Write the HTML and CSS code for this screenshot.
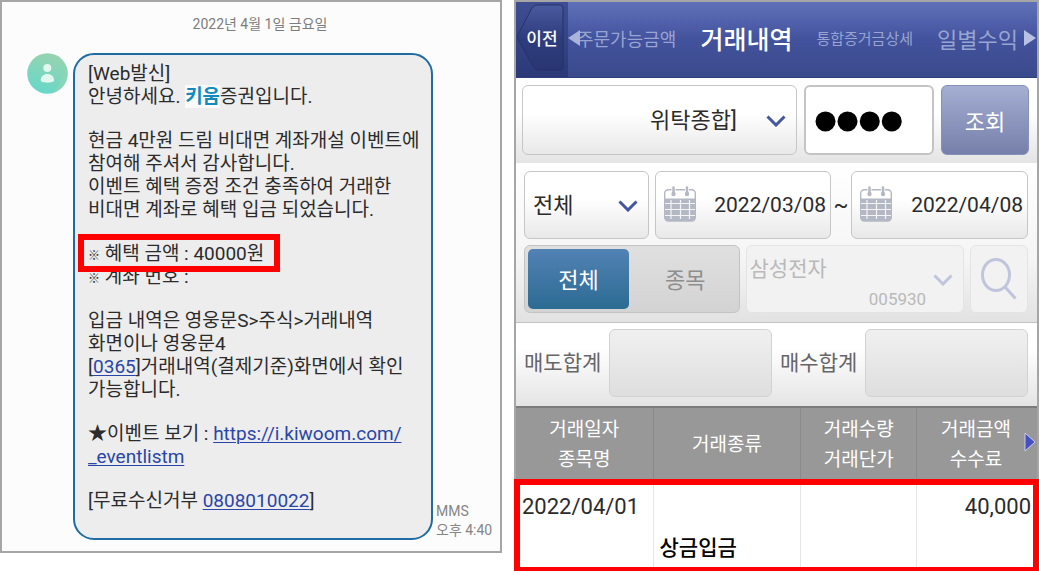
FILE: index.html
```html
<!DOCTYPE html>
<html lang="ko">
<head>
    <meta charset="UTF-8">
    <meta name="viewport" content="width=device-width, initial-scale=1.0">
    <title>거래내역</title>
    <link rel="stylesheet" href="styles.css">
</head>
<body>

    <div class="container">
        <section class="message-panel">
            <p class="date">2022년 4월 1일 금요일</p>

            <div class="message">
                <svg class="avatar" viewBox="0 0 41 41">
                    <defs>
                        <linearGradient id="avatarFill" x1="0.6" y1="0" x2="0.3" y2="1">
                            <stop offset="0" stop-color="#98d3b0"/>
                            <stop offset="1" stop-color="#66d8ca"/>
                        </linearGradient>
                    </defs>
                    <circle cx="20.5" cy="20.5" r="20.3" fill="url(#avatarFill)"/>
                    <path d="M39 13 A20.3 20.3 0 0 1 25 40 Q36 29 39 13Z" fill="#8fd5b4" opacity="0.6"/>
                    <circle cx="20.3" cy="15" r="4" fill="#e2f7ef"/>
                    <path d="M13.7 27.3c0-4 3-6.3 6.7-6.3s6.7 2.3 6.7 6.3c0 1.700-3 2.400-6.700 2.400s-6.700-.7-6.700-2.400z" fill="#e2f7ef"/>
                </svg>

                <div class="bubble">
                    <p>[Web발신]<br>안녕하세요. <b class="brand">키움</b>증권입니다.</p>
                    <p>현금 4만원 드림 비대면 계좌개설 이벤트에<br>참여해 주셔서 감사합니다.<br>이벤트 혜택 증정 조건 충족하여 거래한<br>비대면 계좌로 혜택 입금 되었습니다.</p>
                    <p><span class="amount"><span class="mark">※</span> 혜택 금액 : 40000원</span><br><span class="mark">※</span> 계좌 번호 :</p>
                    <p>입금 내역은 영웅문S&gt;주식&gt;거래내역<br>화면이나 영웅문4<br>[<a href="#">0365</a>]거래내역(결제기준)화면에서 확인<br>가능합니다.</p>
                    <p>★이벤트 보기 : <a href="#">https://i.kiwoom.com/<br>_eventlistm</a></p>
                    <p>[무료수신거부 <a href="#">0808010022</a>]</p>
                </div>

                <div class="meta">MMS<br>오후 4:40</div>
            </div>
        </section>

        <section class="app-panel">
            <header class="top-bar">
                <button type="button" class="back">
                    <svg viewBox="0 0 52 76" preserveAspectRatio="none">
                        <defs>
                            <linearGradient id="backFill" x1="0" y1="0" x2="0" y2="1">
                                <stop offset="0" stop-color="#4a5a9e"/>
                                <stop offset="0.5" stop-color="#2e3d7e"/>
                                <stop offset="1" stop-color="#2a3673"/>
                            </linearGradient>
                        </defs>
                        <path d="M21 3H44Q47 3 47 6V66Q47 69 44 69H23Q19 69 17 65L2 38Q1 36 2 33L16 6Q18 3 21 3Z" fill="url(#backFill)" stroke="#25316b"/>
                    </svg>
                    <span>이전</span>
                </button>
                <nav class="tabs">
                    <svg class="arrow arrow-left" viewBox="0 0 12 16"><path d="M12 0V16L0 8Z" fill="#a9b3dc"/></svg>
                    <a href="#">주문가능금액</a>
                    <a href="#" class="active">거래내역</a>
                    <a href="#" class="small">통합증거금상세</a>
                    <a href="#" class="large">일별수익</a>
                    <svg class="arrow arrow-right" viewBox="0 0 12 16"><path d="M0 0V16L12 8Z" fill="#b9c1e2"/></svg>
                </nav>
            </header>

            <form>
                <div class="account-row">
                    <div class="select-box account">
                        <select aria-label="계좌"><option>위탁종합]</option></select>
                        <svg class="chevron" viewBox="0 0 20 12"><path d="M1.500 1.500L10 10L18.500 1.500"/></svg>
                    </div>
                    <input type="password" class="password" aria-label="비밀번호" value="1234">
                    <button type="button" class="search-button">조회</button>
                </div>

                <div class="filters">
                    <div class="filter-row dates">
                        <div class="select-box">
                            <select aria-label="구분"><option>전체</option></select>
                            <svg class="chevron" viewBox="0 0 20 12"><path d="M1.500 1.500L10 10L18.500 1.500"/></svg>
                        </div>
                        <div class="date-box">
                            <svg class="calendar" viewBox="0 0 32 36">
                                <rect x="0.700" y="3.700" width="30.600" height="31" rx="3.500" fill="#fff" stroke="#b4b8c4" stroke-width="1.400"/>
                                <path d="M0.500 12.500H31.500V31.500Q31.500 35.500 28 35.500H4Q0.500 35.500 0.500 31.500Z" fill="#b4b8c4"/>
                                <path d="M1 17.500H31M1 23.500H31M1 29.500H31M7 14V33M16.500 14V33M25.500 14V33" stroke="#f4f4f6" stroke-width="1.200"/>
                                <path d="M9.500 1.500V8M23 1.500V8" stroke="#fff" stroke-width="4"/>
                                <path d="M9.500 1.500V8M23 1.500V8" stroke="#b4b8c4" stroke-width="2.500" stroke-linecap="round"/>
                                <circle cx="9.500" cy="8" r="2.200" fill="#b4b8c4"/><circle cx="23" cy="8" r="2.200" fill="#b4b8c4"/>
                            </svg>
                            <input type="text" aria-label="시작일" value="2022/03/08">
                        </div>
                        <span class="tilde">~</span>
                        <div class="date-box">
                            <svg class="calendar" viewBox="0 0 32 36">
                                <rect x="0.700" y="3.700" width="30.600" height="31" rx="3.500" fill="#fff" stroke="#b4b8c4" stroke-width="1.400"/>
                                <path d="M0.500 12.500H31.500V31.500Q31.500 35.500 28 35.500H4Q0.500 35.500 0.500 31.500Z" fill="#b4b8c4"/>
                                <path d="M1 17.500H31M1 23.500H31M1 29.500H31M7 14V33M16.500 14V33M25.500 14V33" stroke="#f4f4f6" stroke-width="1.200"/>
                                <path d="M9.500 1.500V8M23 1.500V8" stroke="#fff" stroke-width="4"/>
                                <path d="M9.500 1.500V8M23 1.500V8" stroke="#b4b8c4" stroke-width="2.500" stroke-linecap="round"/>
                                <circle cx="9.500" cy="8" r="2.200" fill="#b4b8c4"/><circle cx="23" cy="8" r="2.200" fill="#b4b8c4"/>
                            </svg>
                            <input type="text" aria-label="종료일" value="2022/04/08">
                        </div>
                    </div>

                    <div class="filter-row stocks">
                        <div class="segment">
                            <button type="button" class="on">전체</button>
                            <button type="button">종목</button>
                        </div>
                        <div class="select-box stock">
                            <select aria-label="종목" disabled><option>삼성전자</option></select>
                            <span class="code">005930</span>
                            <svg class="chevron" viewBox="0 0 20 12"><path d="M1.500 1.500L10 10L18.500 1.500"/></svg>
                        </div>
                        <button type="button" class="find" aria-label="종목 검색" disabled>
                            <svg viewBox="0 0 36 42"><ellipse cx="15" cy="17" rx="13.500" ry="15.500"/><path d="M24 29L34.500 40.500"/></svg>
                        </button>
                    </div>
                </div>

                <div class="totals">
                    <label for="sell">매도합계</label>
                    <input type="text" id="sell" readonly>
                    <label for="buy">매수합계</label>
                    <input type="text" id="buy" readonly>
                </div>
            </form>

            <div class="history">
                <table>
                    <colgroup>
                        <col class="col-date"><col class="col-type"><col class="col-count"><col class="col-price">
                    </colgroup>
                    <thead>
                        <tr>
                            <th>거래일자<br>종목명</th>
                            <th>거래종류</th>
                            <th>거래수량<br>거래단가</th>
                            <th>거래금액<br>수수료</th>
                        </tr>
                    </thead>
                    <tbody>
                        <tr>
                            <td>2022/04/01</td>
                            <td class="type">상금입금</td>
                            <td></td>
                            <td class="price">40,000</td>
                        </tr>
                    </tbody>
                </table>
                <svg class="next" viewBox="0 0 12 20"><path d="M1 1V19L11 10Z" fill="#4450c0" stroke="#c8ccec"/></svg>
            </div>
        </section>
    </div>

</body>
</html>
```

FILE: styles.css
```css
* {
    box-sizing: border-box;
}

body {
    font-family: Roboto, "Noto Sans CJK KR", sans-serif;
    background-color: #fff;
    color: #2b2b2b;
    margin: 0;
}

p {
    margin: 0;
}

button, input, select {
    font-family: inherit;
    font-size: 22px;
    color: inherit;
    margin: 0;
    padding: 0;
    min-width: 0;
}

svg {
    display: block;
}

/* Contenedor principal */
.container {
    display: grid;
    grid-template-columns: 502fr 525fr;
    gap: 12px;
    align-items: start;
}

/* Mensaje */
.message-panel {
    border: 2px solid #a6a6a6;
    background-color: #fcfcfc;
    padding-bottom: 11px;
}

.date {
    padding: 10px 0 17px 18px;
    font-size: 14px;
    line-height: 24px;
    text-align: center;
    color: #7d7d7d;
}

.message {
    display: flex;
    padding-left: 25px;
}

.avatar {
    width: 41px;
    height: 41px;
    margin-right: 5px;
    flex: none;
}

.bubble {
    flex: 1;
    display: flex;
    flex-direction: column;
    gap: 21px;
    padding: 7px 0 26px 13px;
    border: 2px solid #1f6ba3;
    border-radius: 21px;
    background-color: #ededed;
    font-size: 19px;
    line-height: 23px;
    white-space: nowrap;
}

.bubble a {
    color: #2a45a8;
    text-underline-offset: 2px;
    text-decoration-thickness: 1px;
}

.brand {
    color: #128abb;
    background-color: #fafafa;
}

.mark {
    font-size: 12px;
    line-height: 1;
}

.amount {
    position: relative;
}

.amount::after {
    content: "";
    position: absolute;
    inset: -8px -16px -7px -10px;
    border: 6px solid #f00;
}

.meta {
    width: 67px;
    align-self: flex-end;
    padding-left: 3px;
    font-size: 14px;
    line-height: 19px;
    color: #858585;
    white-space: nowrap;
}

/* Barra superior */
.app-panel {
    border: 2px solid #a6a6a6;
    border-bottom: none;
}

.top-bar {
    display: flex;
    height: 76px;
    background: linear-gradient(#6070b8, #42529d 50%, #3b4a8b);
    border-bottom: 1px solid #303f7c;
}

.back {
    position: relative;
    width: 52px;
    padding-bottom: 4px;
    border: none;
    background: linear-gradient(#3f4e92, #2b3977);
    color: #fff;
    font-size: 17px;
    font-weight: 500;
}

.back svg {
    position: absolute;
    inset: 0;
    width: 100%;
    height: 100%;
}

.back span {
    position: relative;
}

.tabs {
    position: relative;
    flex: 1;
    display: flex;
    align-items: center;
    justify-content: space-between;
    padding: 0 19px 4px 9px;
}

.tabs a {
    color: #98a4d2;
    font-size: 18px;
    text-decoration: none;
    white-space: nowrap;
}

.tabs .active {
    color: #fff;
    font-size: 25px;
    font-weight: 500;
}

.tabs .small {
    font-size: 15px;
}

.tabs .large {
    font-size: 22px;
}

.arrow {
    position: absolute;
    top: 28px;
    width: 12px;
    height: 16px;
}

.arrow-left {
    left: 0;
}

.arrow-right {
    right: 1px;
}

/* Campos de consulta */
.account-row {
    display: grid;
    grid-template-columns: 274fr 130fr 88fr;
    gap: 7px;
    padding: 7px 8px 8px 6px;
    background: linear-gradient(#fff 40%, #e4e4e4);
}

.account-row > * {
    height: 70px;
}

.select-box {
    position: relative;
}

.select-box select {
    appearance: none;
    width: 100%;
    height: 100%;
    padding-left: 8px;
    border: 1px solid #c6c6c6;
    border-radius: 6px;
    background: linear-gradient(#fff 40%, #e8e8e8);
}

.account select {
    padding-left: 127px;
}

.chevron {
    position: absolute;
    top: 50%;
    right: 11px;
    width: 20px;
    height: 12px;
    margin-top: -5px;
    fill: none;
    stroke: #4355a3;
    stroke-width: 3;
}

.password {
    padding-left: 9px;
    border: 2px solid #c4c4c4;
    border-radius: 6px;
    background-color: #fff;
    color: #000;
    font-family: "Liberation Sans", sans-serif;
    font-size: 63px;
    -webkit-text-stroke: 3px #000;
}

.search-button {
    border: 1px solid #8590bb;
    border-radius: 6px;
    background: linear-gradient(#a5afd3, #757fa9);
    color: #fff;
}

.filters {
    display: grid;
    gap: 6px;
    padding: 8px 9px 9px 8px;
    background: linear-gradient(#fff, #f5f5f5 60%, #e2e2e2);
    border-bottom: 1px solid #c2c2c2;
}

.filter-row {
    display: grid;
}

.filter-row > * {
    height: 68px;
}

.dates {
    grid-template-columns: 125fr 6px 176fr 20px 177fr;
}

.dates > :first-child {
    grid-column: 1;
}

.dates > :nth-child(2) {
    grid-column: 3;
}

.date-box {
    display: flex;
    align-items: center;
    padding: 0 4px 0 8px;
    border: 1px solid #c6c6c6;
    border-radius: 6px;
    background: linear-gradient(#fff 40%, #e8e8e8);
}

.calendar {
    width: 32px;
    height: 36px;
    margin-bottom: 2px;
    flex: none;
}

.date-box input {
    flex: 1;
    width: 0;
    border: none;
    background: none;
    font-size: 21px;
    text-align: right;
}

.tilde {
    font-size: 22px;
    line-height: 68px;
    text-align: center;
}

.stocks {
    grid-template-columns: 216fr 219fr 58fr;
    gap: 6px;
}

.segment {
    display: grid;
    grid-template-columns: 1fr 1fr;
    gap: 6px;
    padding: 3px;
    border: 1px solid #c0c4c4;
    border-radius: 6px;
    background: linear-gradient(#e0e0e0, #d3d3d3);
}

.segment button {
    padding-bottom: 3px;
    border: none;
    border-radius: 5px;
    background: none;
    color: #8e8e8e;
}

.segment .on {
    background: linear-gradient(#5182b4, #2c6b92);
    color: #fff;
}

.stock select {
    padding: 0 0 20px 3px;
    border-color: #e4e4e4;
    background: #f2f2f2;
    color: #b9b9b9;
    font-size: 21px;
    opacity: 1;
}

.stock .code {
    position: absolute;
    right: 38px;
    bottom: 4px;
    font-size: 17px;
    line-height: 20px;
    color: #b9b9b9;
}

.stock .chevron, .find svg {
    stroke: #c0c5dc;
}

.find {
    display: grid;
    place-items: center;
    border: 1px solid #e4e4e4;
    border-radius: 6px;
    background-color: #f2f2f2;
}

.find svg {
    width: 36px;
    height: 42px;
    fill: none;
    stroke-width: 3;
}

/* Totales */
.totals {
    display: grid;
    grid-template-columns: auto 1fr auto 1fr;
    gap: 8px;
    align-items: center;
    padding: 6px 9px 9px 8px;
    background: linear-gradient(#fff 30%, #e4e4e4);
}

.totals label {
    padding-bottom: 4px;
    font-size: 21px;
    color: #666;
}

.totals input {
    width: 100%;
    height: 68px;
    border: 1px solid #d2d2d2;
    border-radius: 6px;
    background: linear-gradient(#f0f0f0, #dedede);
}

/* Tabla de movimientos */
.history {
    position: relative;
}

table {
    width: 100%;
    table-layout: fixed;
    border-collapse: collapse;
}

.col-date {
    width: 26.3%;
}

.col-type {
    width: 28.4%;
}

.col-count {
    width: 22.2%;
}

th {
    height: 74px;
    padding: 0;
    border-top: 2px solid #7c7c7c;
    border-right: 1px solid #8a8a8a;
    background-color: #989898;
    color: #fff;
    font-size: 19px;
    font-weight: 400;
    line-height: 30px;
}

th:last-child {
    padding-right: 2px;
}

td {
    height: 90px;
    padding: 11px 6px;
    border-right: 1px solid #e6e6e6;
    font-size: 22px;
    line-height: 30px;
    vertical-align: top;
}

th:last-child, td:last-child {
    border-right: none;
}

tbody tr {
    outline: 6px solid #f00;
    outline-offset: -4px;
}

.type {
    vertical-align: bottom;
    padding-bottom: 8px;
    font-size: 21px;
    font-weight: 500;
    color: #000;
}

.price {
    text-align: right;
}

.next {
    position: absolute;
    top: 26px;
    right: 1px;
    width: 12px;
    height: 20px;
}
```
